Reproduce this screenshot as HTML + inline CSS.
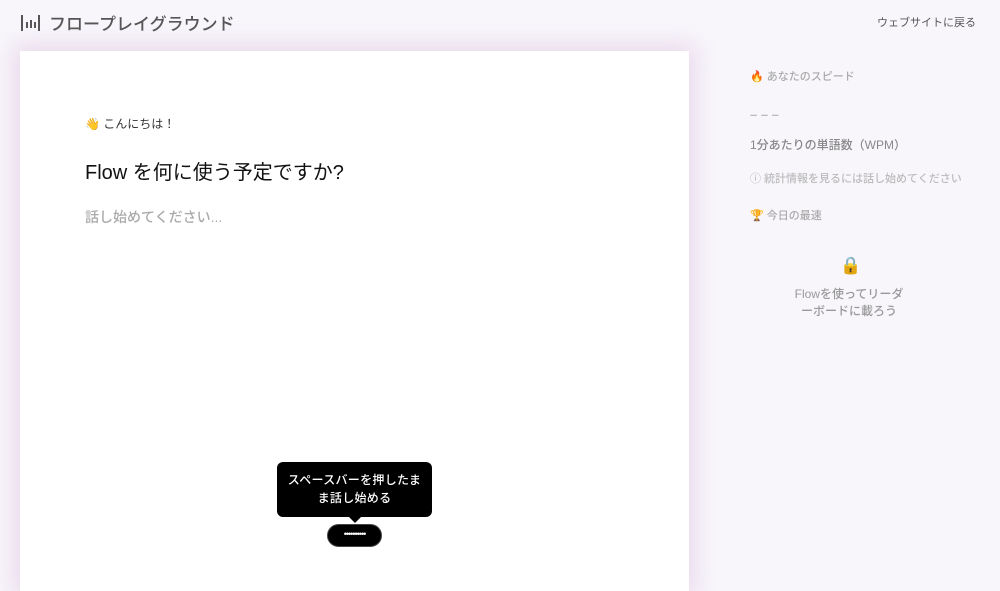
<!DOCTYPE html>
<html><head><meta charset="utf-8"><style>
*{margin:0;padding:0;box-sizing:border-box}
body{width:1000px;height:568px;overflow:hidden;background:#f8f6fb;font-family:"Liberation Sans","Noto Sans CJK JP",sans-serif;position:relative;color:#222}
.logo{position:absolute;left:20px;top:10px;display:flex;align-items:center;gap:9px;font-size:17px;color:#555;font-weight:500}
.back{position:absolute;right:24px;top:14px;font-size:11px;color:#555}
.card{position:absolute;left:20px;top:51px;width:669px;height:540px;background:#fff;box-shadow:0 0 22px 6px rgba(215,180,215,.45)}
.hi{position:absolute;left:65px;top:64px;font-size:12px;color:#333}
.q{position:absolute;left:65px;top:105px;font-size:20px;color:#111}
.ph{position:absolute;left:65px;top:156px;font-size:14px;color:#aaa;font-weight:500}
.tip{position:absolute;left:257px;top:411px;width:155px;height:55px;background:#000;border-radius:6px;color:#fff;font-size:12px;text-align:center;line-height:18px;padding-top:9px;font-weight:500;letter-spacing:.3px}
.tip:after{content:"";position:absolute;left:72px;bottom:-6px;border:6px solid transparent;border-bottom:0;border-top-color:#000}
.pill{position:absolute;left:307px;top:473px;width:55px;height:23px;background:#000;border-radius:12px;border:1px solid #444;color:#fff;font-size:9px;text-align:center;line-height:18px;letter-spacing:-1px}
.side{position:absolute;left:750px;font-size:11px;color:#aaa;font-weight:500}
</style></head><body>
<div class="logo"><svg width="20" height="20" viewBox="0 0 20 20"><g stroke="#555" stroke-width="2"><line x1="2" y1="2" x2="2" y2="18"/><line x1="7" y1="9" x2="7" y2="15"/><line x1="11" y1="7" x2="11" y2="15"/><line x1="15" y1="9" x2="15" y2="15"/><line x1="19" y1="2" x2="19" y2="18"/></g></svg>フロープレイグラウンド</div>
<div class="back">ウェブサイトに戻る</div>
<div class="card">
<div class="hi">👋 こんにちは！</div>
<div class="q">Flow を何に使う予定ですか?</div>
<div class="ph">話し始めてください...</div>
<div class="tip">スペースバーを押したま<br>ま話し始める</div>
<div class="pill">••••••••••</div>
</div>
<div class="side" style="top:68px">🔥 あなたのスピード</div>
<div class="side" style="top:107px;font-size:13px;color:#bbb;font-weight:bold">– – –</div>
<div class="side" style="top:136px;font-size:12px;color:#888">1分あたりの単語数（WPM）</div>
<div class="side" style="top:170px;color:#bbb">ⓘ 統計情報を見るには話し始めてください</div>
<div class="side" style="top:207px">🏆 今日の最速</div>
<div class="side" style="left:840px;top:256px;font-size:17px">🔒</div>
<div class="side" style="left:760px;width:178px;top:286px;font-size:12px;color:#999;text-align:center;line-height:17px">Flowを使ってリーダ<br>ーボードに載ろう</div>
</body></html>
